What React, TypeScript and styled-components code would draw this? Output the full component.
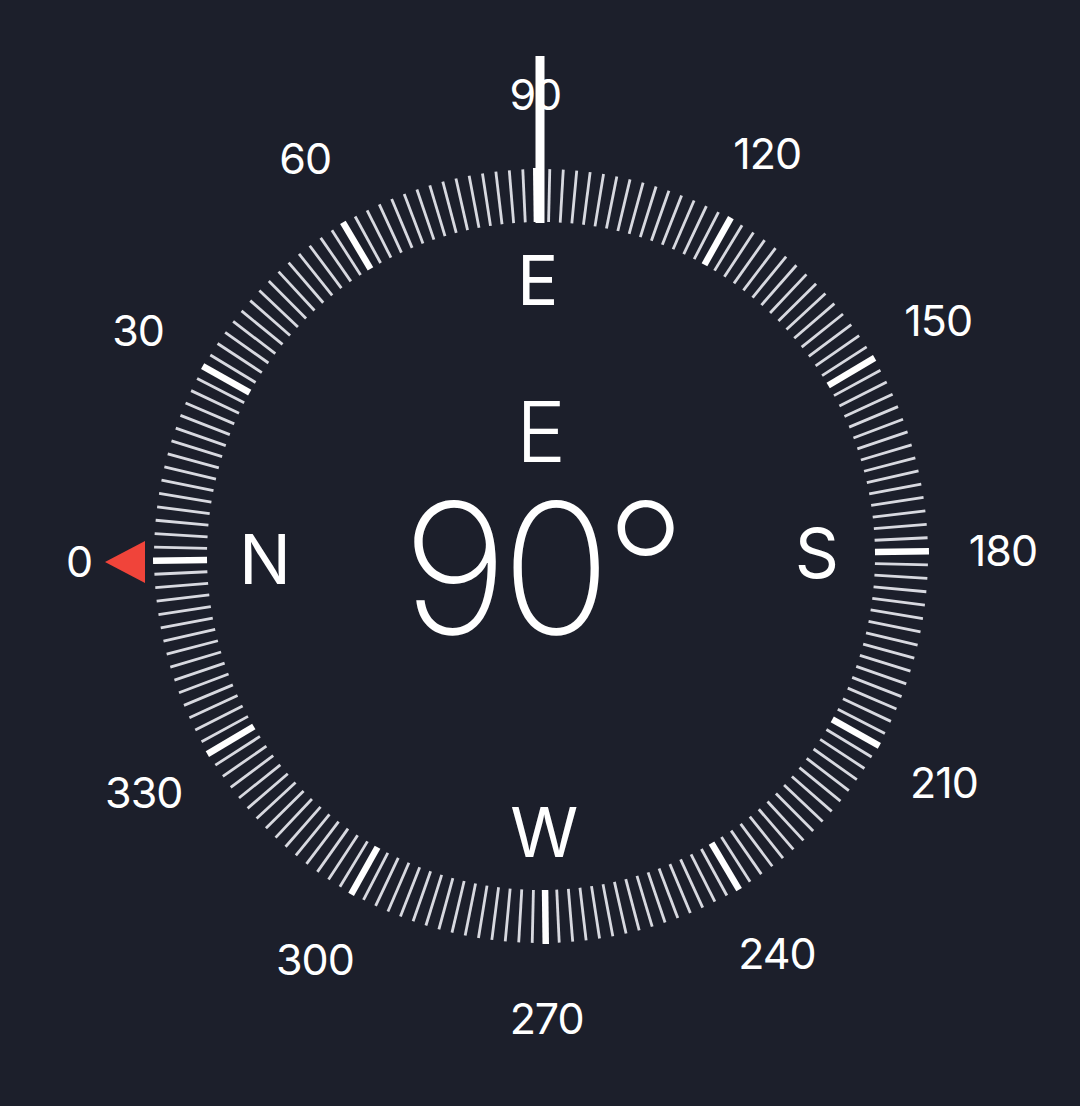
import { FC } from 'react';
import styled, { createGlobalStyle } from 'styled-components';

const CX = 541;
const CY = 556;
const ROT = -0.7;
const TICK_IN = 334;
const TICK_OUT = 387;
const LABEL_R = 462;
const CARDINAL_R = 276;

const GlobalStyle = createGlobalStyle`
	html, body {
		margin: 0;
		padding: 0;
		background: #1c1f2b;
	}
	body {
		font-family: Inter, "Noto Sans", sans-serif;
		color: #ffffff;
	}
`;

const Stage = styled.main`
	display: grid;
	width: 1080px;
	height: 1106px;
	background: #1c1f2b;
	overflow: hidden;

	& > * {
		grid-area: 1 / 1;
	}
`;

const Dial = styled.svg`
	display: block;
	width: 1080px;
	height: 1106px;
`;

const Readout = styled.div`
	display: flex;
	flex-direction: column;
	align-items: center;
	gap: 22px;
	padding-top: 390px;
	padding-left: 2px;
	pointer-events: none;
`;

const Direction = styled.div`
	font-size: 84px;
	font-weight: 300;
	line-height: 1;
`;

const Heading = styled.div`
	font-size: 182px;
	font-weight: 200;
	line-height: 0.8;
	letter-spacing: -7px;
`;

const polar = (deg: number, r: number) => {
	const t = ((deg - 90 + ROT) * Math.PI) / 180;
	return { x: CX + r * Math.sin(t), y: CY - r * Math.cos(t) };
};

const Ticks: FC = () => {
	const ticks = [];
	for (let d = 0; d < 360; d += 2) {
		const major = d % 30 === 0;
		const a = polar(d, TICK_IN);
		const b = polar(d, major ? TICK_OUT + 1 : TICK_OUT);
		ticks.push(
			<line
				key={d}
				x1={a.x}
				y1={a.y}
				x2={b.x}
				y2={b.y}
				stroke={major ? '#ffffff' : 'rgba(228,230,236,0.94)'}
				strokeWidth={major ? 6.5 : 2.8}
			/>
		);
	}
	return <g>{ticks}</g>;
};

const DegreeLabels: FC = () => {
	const size = 43;
	return (
		<g fill="#ffffff" fontFamily="Inter, sans-serif" fontSize={size} textAnchor="middle">
			{Array.from({ length: 12 }, (_, i) => i * 30).map((d) => {
				const p = polar(d, LABEL_R);
				return (
					<text key={d} x={p.x} y={p.y + size * 0.3635} letterSpacing={-1}>
						{d}
					</text>
				);
			})}
		</g>
	);
};

const cardinals = [
	{ label: 'N', deg: 0 },
	{ label: 'E', deg: 90 },
	{ label: 'S', deg: 180 },
	{ label: 'W', deg: 270 },
];

const CardinalLabels: FC = () => {
	const size = 69;
	return (
		<g fill="#ffffff" fontFamily="Inter, sans-serif" fontSize={size} textAnchor="middle">
			{cardinals.map((c) => {
				const p = polar(c.deg, CARDINAL_R);
				return (
					<text key={c.label} x={p.x} y={p.y + size * 0.3635}>
						{c.label}
					</text>
				);
			})}
		</g>
	);
};

const App: FC = () => {
	return (
		<>
			<GlobalStyle />
			<Stage>
				<Dial viewBox="0 0 1080 1106">
					<Ticks />
					<DegreeLabels />
					<CardinalLabels />
					<rect x={535.5} y={56} width={9} height={167} fill="#ffffff" />
					<polygon points="105,562 145,541 145,583" fill="#f0443a" />
				</Dial>
				<Readout>
					<Direction>E</Direction>
					<Heading>90°</Heading>
				</Readout>
			</Stage>
		</>
	);
};

export default App;
